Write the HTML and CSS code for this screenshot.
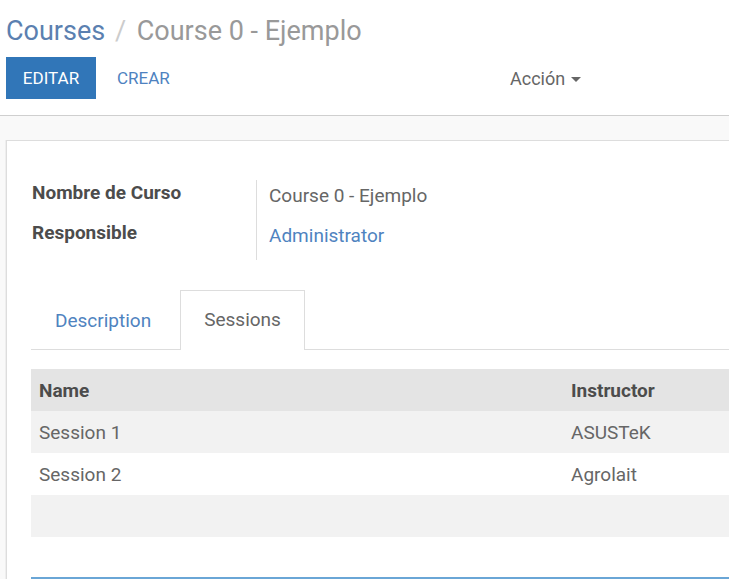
FILE: index.html
```html
<!DOCTYPE html>
<html lang="es">
<head>
<meta charset="utf-8">
<title>Course 0 - Ejemplo</title>
<link rel="stylesheet" href="styles.css">
</head>
<body>
<div class="control-panel">
  <div class="breadcrumb">
    <a class="crumb-link">Courses</a>
    <span class="crumb-sep">/</span>
    <span class="crumb-current">Course 0 - Ejemplo</span>
  </div>
  <div class="toolbar">
    <div class="buttons">
      <button class="btn btn-primary">EDITAR</button>
      <button class="btn btn-link">CREAR</button>
    </div>
    <div class="sidebar">
      <span class="dropdown">Acción <span class="caret"></span></span>
    </div>
  </div>
</div>
<div class="content">
  <div class="sheet">
    <div class="group">
      <div class="labels">
        <div class="label">Nombre de Curso</div>
        <div class="label">Responsible</div>
      </div>
      <div class="values">
        <div class="value">Course 0 - Ejemplo</div>
        <div class="value link">Administrator</div>
      </div>
    </div>
    <div class="tabs">
      <div class="tab">Description</div>
      <div class="tab active">Sessions</div>
    </div>
    <div class="table">
      <div class="row head">
        <div class="cell name">Name</div>
        <div class="cell instr">Instructor</div>
      </div>
      <div class="row odd">
        <div class="cell name">Session 1</div>
        <div class="cell instr">ASUSTeK</div>
      </div>
      <div class="row">
        <div class="cell name">Session 2</div>
        <div class="cell instr">Agrolait</div>
      </div>
      <div class="row odd empty"></div>
    </div>
    <div class="focus-line"></div>
  </div>
</div>
</body>
</html>
```
FILE: styles.css
```css
html, body {
  margin: 0;
  padding: 0;
  height: 100%;
  overflow: hidden;
}
body {
  font-family: Roboto, "Liberation Sans", sans-serif;
  color: #666666;
  background: #ffffff;
}
.control-panel {
  padding: 15px 0 0 6px;
  border-bottom: 1px solid #cfcfcf;
  height: 116px;
  box-sizing: border-box;
}
.breadcrumb {
  font-size: 27px;
  line-height: 32px;
  white-space: nowrap;
}
.crumb-link {
  color: #5b80b0;
}
.crumb-sep {
  color: #cccccc;
  margin: 0 4px 0 3px;
}
.crumb-current {
  color: #999999;
}
.toolbar {
  display: flex;
  align-items: center;
  margin-top: 10px;
}
.buttons {
  display: flex;
  align-items: center;
  width: 500px;
}
.btn {
  font-family: Roboto, "Liberation Sans", sans-serif;
  font-size: 17px;
  border: 0;
  height: 42px;
  padding: 0 16px;
  cursor: pointer;
}
.btn-primary {
  background: #3176b8;
  color: #ffffff;
  width: 90px;
  padding: 0;
}
.btn-link {
  background: transparent;
  color: #4e82bf;
  margin-left: 5px;
}
.sidebar {
  font-size: 18px;
  color: #666666;
  padding-left: 4px;
}
.caret {
  display: inline-block;
  width: 0;
  height: 0;
  border-left: 5px solid transparent;
  border-right: 5px solid transparent;
  border-top: 5px solid #666666;
  vertical-align: middle;
  margin-left: 1px;
}
.content {
  background: #f9f9f9;
  padding: 24px 0 0 6px;
  height: 100%;
  box-sizing: border-box;
}
.sheet {
  background: #ffffff;
  border: 1px solid #dddddd;
  border-right: 0;
  box-shadow: -1px 0 0 #eeeeee;
  padding: 39px 0 0 24px;
  height: 600px;
}
.group {
  display: flex;
  font-size: 19px;
}
.labels {
  width: 224px;
  border-right: 1px solid #dddddd;
  padding: 0 0 0 1px;
}
.label {
  font-weight: bold;
  color: #4c4c4c;
  height: 40px;
  line-height: 26px;
}
.values {
  padding: 3px 0 0 12px;
}
.value {
  height: 40px;
  line-height: 26px;
}
.value.link {
  color: #4f83c0;
}
.labels, .values {
  height: 80px;
}
.tabs {
  display: flex;
  margin-top: 28px;
  border-bottom: 1px solid #dddddd;
  font-size: 19px;
  height: 58px;
}
.tab {
  padding: 0 24px 0 23px;
  line-height: 58px;
  color: #4f83c0;
  border: 1px solid transparent;
  border-bottom: 0;
  margin-right: 4px;
}
.tab.active {
  color: #666666;
  border-color: #dddddd;
  background: #ffffff;
  height: 59px;
  margin-top: -1px;
  padding: 0 23px;
}
.table {
  margin-top: 19px;
  font-size: 19px;
}
.row {
  display: flex;
  height: 42px;
  align-items: center;
}
.row.head {
  background: #e4e4e4;
  font-weight: bold;
  color: #4c4c4c;
}
.row.odd {
  background: #f2f2f2;
}
.cell.name {
  width: 532px;
  padding-left: 8px;
}
.focus-line {
  margin-top: 40px;
  height: 2px;
  background: #6aa6d6;
}
```
